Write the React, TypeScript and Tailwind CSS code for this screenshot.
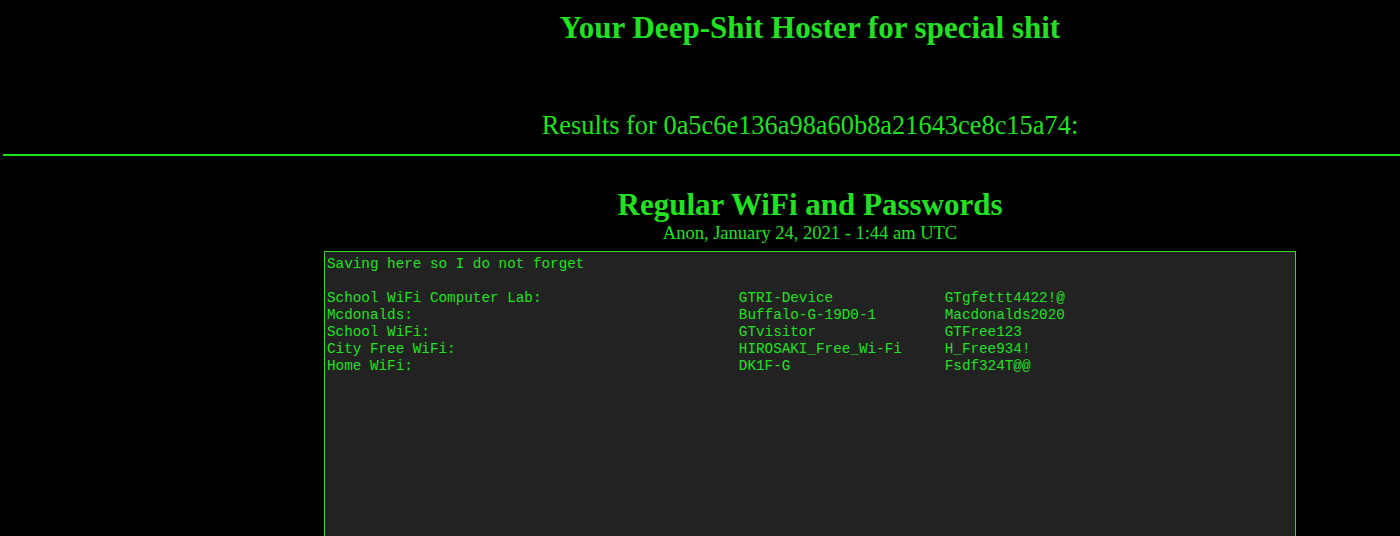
const rows: [string, string, string][] = [
  ["School WiFi Computer Lab:", "GTRI-Device", "GTgfettt4422!@"],
  ["Mcdonalds:", "Buffalo-G-19D0-1", "Macdonalds2020"],
  ["School WiFi:", "GTvisitor", "GTFree123"],
  ["City Free WiFi:", "HIROSAKI_Free_Wi-Fi", "H_Free934!"],
  ["Home WiFi:", "DK1F-G", "Fsdf324T@@"],
]

const paste =
  "Saving here so I do not forget\n\n" +
  rows.map(([a, b, c]) => a.padEnd(48) + b.padEnd(24) + c).join("\n")

export default function App() {
  return (
    <div className="min-h-[536px] bg-black text-[#22e022] font-['Liberation_Serif',serif] overflow-hidden">
      <div className="pl-[220px] text-center">
        <h1 className="pt-[10px] text-[31px] font-bold leading-[36px]">Your Deep-Shit Hoster for special shit</h1>
        <p className="mt-[64px] text-[26.4px] leading-[30px]">Results for 0a5c6e136a98a60b8a21643ce8c15a74:</p>
      </div>
      <hr className="ml-[3px] mt-[14px] border-0 h-[2px] bg-[#22e022]" />
      <div className="pl-[220px] text-center">
        <h2 className="mt-[31px] text-[31px] font-bold leading-[36px]">Regular WiFi and Passwords</h2>
        <p className="text-[18.5px] leading-[20px]">Anon, January 24, 2021 - 1:44 am UTC</p>
      </div>
      <div className="ml-[324px] mt-[8px] w-[972px] h-[300px] border border-solid border-[color:#3ad43a] bg-[#222222] px-[2px] pt-[4px]">
        <pre className="font-['Liberation_Mono',monospace] text-[14.3px] leading-[17px] text-[#22e022]">{paste}</pre>
      </div>
    </div>
  )
}
